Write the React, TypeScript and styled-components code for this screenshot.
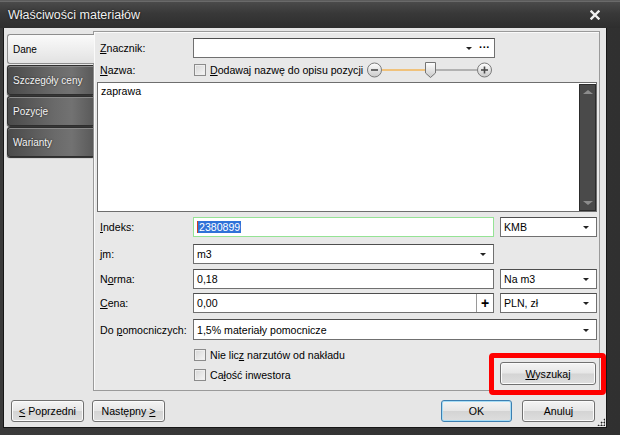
import React from 'react'
import styled, { createGlobalStyle } from 'styled-components'

const GlobalStyle = createGlobalStyle`
  html, body {
    margin: 0;
    padding: 0;
  }
  body {
    background: #2b2b2b;
    font-family: "Liberation Sans", Arial, sans-serif;
    font-size: 10.6px;
    color: #000;
  }
  * {
    box-sizing: border-box;
  }
`

const tabs = ['Dane', 'Szczegóły ceny', 'Pozycje', 'Warianty']

export default function App() {
  return (
    <>
      <GlobalStyle />
      <Window>
        <TitleBar>
          <Title>Właściwości materiałów</Title>
          <CloseIcon />
        </TitleBar>
        <Frame>
          <Client>
            <Main>
              <TabList>
                {tabs.map((t, i) => (
                  <Tab key={t} $active={i === 0}>
                    {t}
                  </Tab>
                ))}
              </TabList>
              <Panel>
                <Row>
                  <Label>
                    <u>Z</u>nacznik:
                  </Label>
                  <Field $right={1}>
                    <FieldText />
                    <Arrow />
                    <Dots>···</Dots>
                  </Field>
                </Row>
                <Row $mt={3} $h={18}>
                  <Label>
                    <u>N</u>azwa:
                  </Label>
                  <NameOptions>
                    <CheckLine>
                      <CheckBox />
                      <span>
                        <u>D</u>odawaj nazwę do opisu pozycji
                      </span>
                    </CheckLine>
                    <ZoomSlider />
                  </NameOptions>
                </Row>
                <TextArea>
                  <TextAreaText>zaprawa</TextAreaText>
                  <ScrollBar>
                    <ScrollArrow $up />
                    <ScrollArrow />
                  </ScrollBar>
                </TextArea>
                <Row $mt={5}>
                  <Label>
                    <u>I</u>ndeks:
                  </Label>
                  <Field $focus>
                    <Selected>2380899</Selected>
                  </Field>
                  <Field>
                    <FieldText>KMB</FieldText>
                    <Arrow />
                  </Field>
                </Row>
                <Row $mt={7}>
                  <Label>
                    <u>j</u>m:
                  </Label>
                  <Field>
                    <FieldText>m3</FieldText>
                    <Arrow />
                  </Field>
                </Row>
                <Row $mt={5}>
                  <Label>
                    N<u>o</u>rma:
                  </Label>
                  <Field>
                    <FieldText>0,18</FieldText>
                  </Field>
                  <Field>
                    <FieldText>Na m3</FieldText>
                    <Arrow />
                  </Field>
                </Row>
                <Row $mt={4}>
                  <Label>
                    <u>C</u>ena:
                  </Label>
                  <Field>
                    <FieldText>0,00</FieldText>
                    <PlusButton>+</PlusButton>
                  </Field>
                  <Field>
                    <FieldText>PLN, zł</FieldText>
                    <Arrow />
                  </Field>
                </Row>
                <Row $mt={6} $h={21}>
                  <Label>
                    Do <u>p</u>omocniczych:
                  </Label>
                  <Field $wide>
                    <FieldText>1,5% materiały pomocnicze</FieldText>
                    <Arrow />
                  </Field>
                </Row>
                <BottomRow>
                  <span />
                  <CheckList>
                    <CheckLine>
                      <CheckBox />
                      <span>
                        Nie lic<u>z</u> narzutów od nakładu
                      </span>
                    </CheckLine>
                    <CheckLine>
                      <CheckBox />
                      <span>
                        Ca<u>ł</u>ość inwestora
                      </span>
                    </CheckLine>
                  </CheckList>
                  <SearchButton>
                    <u>W</u>yszukaj
                  </SearchButton>
                </BottomRow>
              </Panel>
            </Main>
            <Footer>
              <ButtonGroup $gap={8}>
                <Button>
                  <u>&lt;</u> Poprzedni
                </Button>
                <Button>
                  Następny <u>&gt;</u>
                </Button>
              </ButtonGroup>
              <ButtonGroup $gap={10}>
                <Button $default>OK</Button>
                <Button>Anuluj</Button>
              </ButtonGroup>
            </Footer>
            <Grip />
          </Client>
        </Frame>
        <Highlight />
      </Window>
    </>
  )
}

function CloseIcon() {
  return (
    <CloseSvg width="10" height="10" viewBox="0 0 10 10">
      <path d="M1.5 1.5 L8.5 8.5 M8.5 1.5 L1.5 8.5" stroke="#f0f0f0" strokeWidth="2.4" strokeLinecap="square" />
    </CloseSvg>
  )
}

function ZoomSlider() {
  return (
    <svg width="129" height="18" viewBox="0 0 129 18">
      <defs>
        <linearGradient id="knob" x1="0" y1="0" x2="0" y2="1">
          <stop offset="0" stopColor="#ffffff" />
          <stop offset="1" stopColor="#c9c9c9" />
        </linearGradient>
      </defs>
      <line x1="16" y1="9" x2="59" y2="9" stroke="#f0c27c" strokeWidth="2" />
      <line x1="70" y1="9" x2="111" y2="9" stroke="#7c7c7c" strokeWidth="1" />
      <circle cx="8.5" cy="9" r="7" fill="url(#knob)" stroke="#7a7a7a" />
      <line x1="5" y1="9" x2="12" y2="9" stroke="#4a4a4a" strokeWidth="1.6" />
      <circle cx="118.5" cy="9" r="7" fill="url(#knob)" stroke="#7a7a7a" />
      <line x1="115" y1="9" x2="122" y2="9" stroke="#4a4a4a" strokeWidth="1.6" />
      <line x1="118.5" y1="5.5" x2="118.5" y2="12.5" stroke="#4a4a4a" strokeWidth="1.6" />
      <path d="M59.5 1.5 H69.5 V12 L64.5 16.5 L59.5 12 Z" fill="url(#knob)" stroke="#747474" />
    </svg>
  )
}

const Window = styled.div`
  position: relative;
  width: 620px;
  height: 435px;
  display: flex;
  flex-direction: column;
  background: #363636;
  border-top: 1px solid #5c5c5c;
  overflow: hidden;
`

const TitleBar = styled.div`
  height: 27px;
  display: flex;
  align-items: center;
  justify-content: space-between;
  padding: 0 20px 0 8px;
  background: linear-gradient(#4a4a4a, #383838 45%, #2e2e2e);
  border-top: 1px solid #6a6a6a;
`

const Title = styled.div`
  font-family: "Liberation Sans", Arial, sans-serif;
  font-size: 12.5px;
  color: #f0f0f0;
  text-shadow: 0 0 2px #000;
`

const CloseSvg = styled.svg`
  display: block;
`

const Frame = styled.div`
  flex: 1;
  display: flex;
  padding: 0 13px 7px 3px;
  background: linear-gradient(to right, #3a3a3a, #303030);
`

const Client = styled.div`
  position: relative;
  flex: 1;
  min-width: 0;
  display: flex;
  flex-direction: column;
  background: #e6e6e6;
  border-left: 1px solid #161616;
  border-right: 1px solid #161616;
  border-bottom: 1px solid #161616;
  padding: 3px 6px 0 3px;
`

const Main = styled.div`
  display: flex;
  height: 360px;
`

const TabList = styled.div`
  flex: none;
  width: 86px;
  display: flex;
  flex-direction: column;
  gap: 1px;
  padding-top: 3px;
`

const Tab = styled.div<{ $active?: boolean }>`
  position: relative;
  height: 30px;
  display: flex;
  align-items: center;
  padding-left: 5px;
  border-radius: 3px 0 0 3px;
  font-size: 10px;
  white-space: nowrap;
  overflow: hidden;
  ${({ $active }) =>
    $active
      ? `
    background: linear-gradient(#fafafa, #ececec 60%, #e2e2e2);
    border: 1px solid #8d8d8d;
    border-right: none;
    margin-right: -1px;
    z-index: 1;
    color: #000;
  `
      : `
    background: linear-gradient(to right, #4a4a4a, #6a6a6a 55%, #727272 75%, #5a5a5a);
    border: 1px solid #2e2e2e;
    border-right: none;
    box-shadow: inset 0 1px 0 #8a8a8a, 0 1px 1px #222;
    color: #f4f4f4;
    text-shadow: 0 0 2px #222;
  `}
`

const Panel = styled.div`
  flex: 1;
  min-width: 0;
  display: flex;
  flex-direction: column;
  border: 1px solid #9a9a9a;
  box-shadow: inset 1px 1px 0 #fafafa;
  background: #e8e8e8;
  padding: 6px 2px 0 3px;
`

const Row = styled.div<{ $mt?: number; $h?: number }>`
  display: grid;
  grid-template-columns: 90px 301px 97px;
  column-gap: 6px;
  align-items: center;
  margin-top: ${({ $mt }) => $mt ?? 0}px;
  height: ${({ $h }) => $h ?? 20}px;
`

const Label = styled.div`
  padding-left: 3px;
  white-space: nowrap;
`

const Field = styled.div<{ $focus?: boolean; $wide?: boolean; $right?: number }>`
  height: 100%;
  display: flex;
  align-items: center;
  background: #fff;
  border: 1px solid ${({ $focus }) => ($focus ? '#95e395' : '#707070')};
  border-top-color: ${({ $focus }) => ($focus ? '#95e395' : '#4e4e4e')};
  padding-left: 3px;
  margin-right: ${({ $right }) => ($right ? -$right : 0)}px;
  grid-column: ${({ $wide }) => ($wide ? 'span 2' : 'auto')};
`

const FieldText = styled.span`
  flex: 1;
  white-space: nowrap;
`

const Selected = styled.span`
  background: #2f72d8;
  color: #fff;
  padding: 0 1px;
  border-left: 1px solid #d04020;
`

const Arrow = styled.span`
  width: 0;
  height: 0;
  margin: 1px 7px 0 0;
  border-left: 3px solid transparent;
  border-right: 3px solid transparent;
  border-top: 3px solid #222;
`

const Dots = styled.span`
  font-weight: bold;
  font-size: 11px;
  margin: -2px 4px 0 0;
`

const PlusButton = styled.span`
  width: 17px;
  height: 100%;
  display: flex;
  align-items: center;
  justify-content: center;
  border-left: 1px solid #9a9a9a;
  font-weight: bold;
  font-size: 14px;
`

const NameOptions = styled.div`
  grid-column: span 2;
  display: flex;
  align-items: center;
  gap: 3px;
`

const CheckLine = styled.div`
  display: flex;
  align-items: center;
  gap: 4px;
  white-space: nowrap;
  height: 14px;
`

const CheckBox = styled.span`
  width: 12px;
  height: 12px;
  margin-left: 1px;
  border: 1px solid #8b8b8b;
  background: linear-gradient(135deg, #d6d6d6, #f6f6f6);
  box-shadow: inset 0 0 0 1px #eee;
`

const TextArea = styled.div`
  margin-top: 3px;
  height: 130px;
  display: flex;
  background: #fff;
  border: 1px solid #6e6e6e;
`

const TextAreaText = styled.div`
  flex: 1;
  padding: 2px 3px;
`

const ScrollBar = styled.div`
  width: 17px;
  margin: 1px 0 0;
  background: #4a4a4a;
  border: 1px solid #2c2c2c;
  display: flex;
  flex-direction: column;
  justify-content: space-between;
  align-items: center;
  padding: 5px 0;
`

const ScrollArrow = styled.span<{ $up?: boolean }>`
  width: 0;
  height: 0;
  border-left: 5px solid transparent;
  border-right: 5px solid transparent;
  ${({ $up }) => ($up ? 'border-bottom: 4px solid #8c8c8c;' : 'border-top: 4px solid #8c8c8c;')}
`

const BottomRow = styled.div`
  display: grid;
  grid-template-columns: 90px 301px 97px;
  column-gap: 6px;
  align-items: start;
  margin-top: 8px;
`

const CheckList = styled.div`
  display: flex;
  flex-direction: column;
  gap: 6px;
`

const Button = styled.button<{ $default?: boolean }>`
  height: 22px;
  width: ${({ $default }) => ($default ? 71 : 73)}px;
  font-family: "Liberation Sans", Arial, sans-serif;
  font-size: 10.6px;
  color: #000;
  border-radius: 3px;
  border: 1px solid ${({ $default }) => ($default ? '#3c7fb1' : '#707070')};
  background: linear-gradient(#f4f4f4, #e6e6e6 48%, #d4d4d4 52%, #dedede);
  box-shadow: inset 0 0 0 1px ${({ $default }) => ($default ? '#a6dcf5' : '#fbfbfb')};
  padding: 0;
`

const SearchButton = styled(Button)`
  margin-top: 14px;
  width: 96px;
  height: 23px;
`

const Footer = styled.div`
  display: flex;
  justify-content: space-between;
  padding: 9px 5px 0 4px;
`

const ButtonGroup = styled.div<{ $gap: number }>`
  display: flex;
  gap: ${({ $gap }) => $gap}px;
`

const Grip = styled.div`
  position: absolute;
  right: 1px;
  bottom: 1px;
  width: 8px;
  height: 8px;
  background-image: radial-gradient(circle, #222 0.9px, transparent 1.1px);
  background-size: 3px 3px;
  clip-path: polygon(100% 0, 100% 100%, 0 100%);
`

const Highlight = styled.div`
  position: absolute;
  left: 489px;
  top: 352px;
  width: 117px;
  height: 42px;
  border: 5px solid #ff0000;
  border-radius: 4px;
  pointer-events: none;
`
